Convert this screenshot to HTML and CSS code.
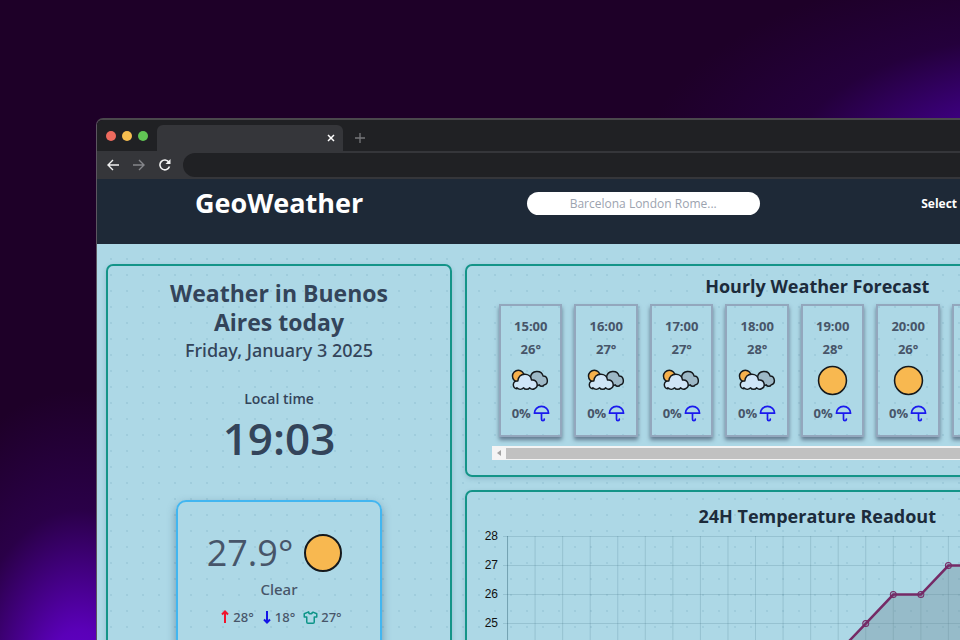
FILE: index.html
```html
<!DOCTYPE html>
<html lang="en">
<head>
<meta charset="utf-8">
<title>GeoWeather</title>
<link rel="stylesheet" href="styles.css">
</head>
<body>
<svg class="defs" width="0" height="0" aria-hidden="true">
  <symbol id="cloudy" viewBox="0 0 40 22">
    <g stroke="#14181c" stroke-width="1.5" stroke-linejoin="round">
      <path fill="#9db8c6" d="M20 8C21 1 31 0 33 7c5 0 6 8 1 9-1 2-4 2-5 0-2 1-9 1-9-8z"/>
      <circle cx="7.500" cy="7" r="6" fill="#f6b04c"/>
      <path fill="#cfe5f7" d="M6 20c-5 0-5-9 1-8 1-9 13-9 14-1 6-1 8 7 3 9-2 1-4 0-5-1-1 2-5 2-6 0-2 2-5 2-7 0z"/>
    </g>
  </symbol>
  <symbol id="sun" viewBox="0 0 40 40">
    <circle cx="20" cy="20" r="18" fill="#f8b850" stroke="#14181c" stroke-width="2"/>
  </symbol>
  <symbol id="umbrella" viewBox="0 0 24 24">
    <path fill="none" stroke="#1a1aee" stroke-width="2.400" stroke-linecap="round" stroke-linejoin="round" d="M2 11.500a10 9.500 0 0 1 20 0zM12 12v8a2 2 0 0 0 4 0"/>
  </symbol>
  <symbol id="arrow-up" viewBox="0 0 10 16">
    <path fill="none" stroke="#f0142d" stroke-width="2" d="M5 14V2M2 5.500 5 2.500l3 3"/>
  </symbol>
  <symbol id="arrow-down" viewBox="0 0 10 16">
    <path fill="none" stroke="#1414e6" stroke-width="2" d="M5 2v12M2 10.500l3 3 3-3"/>
  </symbol>
  <symbol id="shirt" viewBox="0 0 24 24">
    <path fill="none" stroke="#0d9488" stroke-width="2.400" stroke-linejoin="round" d="M15 3l7 3v5h-4v8a2 2 0 0 1-2 2H8a2 2 0 0 1-2-2v-8H2V6l7-3a3 3 0 0 0 6 0"/>
  </symbol>
</svg>

<div class="browser">
  <div class="tabs">
    <div class="lights"><i class="red"></i><i class="amber"></i><i class="green"></i></div>
    <div class="tab">
      <button aria-label="Close tab"><svg width="8" height="8" viewBox="0 0 8 8"><path d="M1 1l6 6M7 1L1 7" stroke="#fff" stroke-width="1.500"/></svg></button>
    </div>
    <button class="new-tab" aria-label="New tab"><svg width="10" height="10" viewBox="0 0 10 10"><path d="M5 0v10M0 5h10" stroke="#76777a" stroke-width="1.300"/></svg></button>
  </div>
  <div class="toolbar">
    <button aria-label="Back"><svg width="12" height="12" viewBox="0 0 12 12"><path d="M12 6H1.500M6 1 1 6l5 5" fill="none" stroke="#f1f1f1" stroke-width="1.400"/></svg></button>
    <button aria-label="Forward"><svg width="12" height="12" viewBox="0 0 12 12"><path d="M0 6h10.500M6 1l5 5-5 5" fill="none" stroke="#85868a" stroke-width="1.400"/></svg></button>
    <button aria-label="Reload"><svg width="12" height="12" viewBox="0 0 12 12"><path d="M10.500 7.500A4.900 4.900 0 1 1 9.800 3" fill="none" stroke="#f1f1f1" stroke-width="1.600"/><path d="M11.500 0v5h-5z" fill="#f1f1f1"/></svg></button>
    <input class="address" type="text" aria-label="Address">
  </div>

  <header class="site-header">
    <h1>GeoWeather</h1>
    <input class="search" type="text" placeholder="Barcelona London Rome..." aria-label="City">
    <span class="select-label">Select</span>
  </header>

  <main class="content">
    <section class="panel today">
      <h2>Weather in Buenos Aires today</h2>
      <p class="date">Friday, January 3 2025</p>
      <p class="local">Local time</p>
      <p class="clock">19:03</p>
      <div class="current">
        <div class="now"><span>27.9°</span><svg width="40" height="40"><use href="#sun"/></svg></div>
        <p class="condition">Clear</p>
        <div class="range">
          <span><svg width="10" height="16"><use href="#arrow-up"/></svg>28°</span>
          <span><svg width="10" height="16"><use href="#arrow-down"/></svg>18°</span>
          <span><svg width="15" height="15"><use href="#shirt"/></svg>27°</span>
        </div>
      </div>
    </section>

    <div class="column">
      <section class="panel hourly">
        <h2>Hourly Weather Forecast</h2>
        <ul class="hours" id="hours"></ul>
        <div class="scrollbar">
          <button aria-label="Scroll left"><svg width="4" height="6" viewBox="0 0 4 6"><path d="M4 0v6L0 3z" fill="#a3a3a3"/></svg></button>
          <div class="thumb"></div>
        </div>
      </section>
      <section class="panel readout">
        <h2>24H Temperature Readout</h2>
        <svg class="chart" id="chart" viewBox="0 0 700 320" role="img" aria-label="Temperature over 24 hours"></svg>
      </section>
    </div>
  </main>
</div>
<script src="app.js"></script>
</body>
</html>
```
FILE: styles.css
```css
* { box-sizing: border-box; }

html, body { height: 100%; }

body {
  margin: 0;
  overflow: hidden;
  font-family: "Segoe UI", "Open Sans", sans-serif;
  color: #33445a;
  background:
    radial-gradient(ellipse 420px 210px at 1060px 170px, #5a00c4 0, rgba(72, 0, 160, 0.7) 35%, rgba(50, 0, 105, 0.3) 65%, rgba(40, 0, 80, 0) 100%),
    radial-gradient(ellipse 190px 300px at 80px 690px, #6400d2 0, #5a00b8 20%, rgba(60, 0, 120, 0.4) 60%, rgba(60, 0, 120, 0) 100%),
    #1e0028;
}

h1, h2, p, ul { margin: 0; padding: 0; }
button { padding: 0; border: 0; background: none; display: grid; place-items: center; }
svg { display: block; }
.defs { position: absolute; }

.browser {
  width: 114vw;
  margin: 118px 0 0 10vw;
  border: 1px solid #5c5560;
  border-top: 2px solid #4a484c;
  border-radius: 7px 7px 0 0;
  overflow: hidden;
}

.tabs {
  display: flex;
  align-items: center;
  height: 31px;
  padding-left: 9px;
  background: #202124;
}
.lights { display: flex; gap: 6px; width: 51px; }
.lights i { width: 10px; height: 10px; border-radius: 50%; }
.red { background: #ed6a5e; }
.amber { background: #f6be4f; }
.green { background: #61c554; }
.tab {
  display: flex;
  align-items: center;
  justify-content: flex-end;
  align-self: flex-end;
  width: 186px;
  height: 26px;
  padding-right: 8px;
  border-radius: 6px 6px 0 0;
  background: #35363a;
}
.new-tab { margin-left: 12px; padding-top: 4px; }

.toolbar {
  display: flex;
  align-items: center;
  gap: 14px;
  height: 28px;
  padding-left: 10px;
  background: #35363a;
}
.address {
  flex: 1;
  height: 24px;
  margin-left: -2px;
  border: 0;
  border-radius: 12px;
  background: #202124;
}

.site-header {
  display: grid;
  grid-template-columns: repeat(3, 1fr);
  justify-items: center;
  align-items: center;
  height: 65px;
  padding-bottom: 16px;
  background: #1e2937;
  color: #fff;
}
.site-header h1 { font-size: 27px; line-height: 32px; padding-bottom: 2px; }
.search {
  width: 64%;
  height: 23px;
  border: 0;
  border-radius: 12px;
  background: #fff;
  font-family: inherit;
  font-size: 12px;
  text-align: center;
}
.search::placeholder { color: #9ca3af; }
.select-label {
  justify-self: start;
  padding-left: 96px;
  font-size: 12px;
  font-weight: 700;
}

.content {
  display: flex;
  gap: 13px;
  padding: 20px 20px 20px 9px;
  background: radial-gradient(circle at 8px 8px, rgba(60, 120, 150, 0.12) 1px, transparent 1px) 6px 7px / 16px 16px, #add8e6;
}
.panel {
  border: 2px solid #149488;
  border-radius: 7px;
  text-align: center;
  box-shadow: 0 2px 5px rgba(40, 80, 110, 0.2);
}
.column { flex: 1; min-width: 0; display: flex; flex-direction: column; gap: 13px; }
.column h2 { color: #1c2b3b; font-size: 18px; line-height: 24px; }

.today { flex: 0 0 346px; padding: 13px 48px; }
.today h2 { font-size: 23px; line-height: 29px; }
.date { font: 500 18px/26px "Segoe UI", "Noto Sans", sans-serif; }
.local { margin-top: 27px; font-size: 14px; line-height: 18px; font-weight: 600; }
.clock { font-size: 44px; line-height: 60px; font-weight: 600; }

.current {
  width: 206px;
  min-height: 230px;
  margin: 32px auto 0;
  padding: 27px 0;
  border: 2px solid #42b6f0;
  border-radius: 10px;
  box-shadow: 0 4px 8px rgba(50, 80, 110, 0.5);
  color: #475569;
}
.now { display: flex; align-items: center; justify-content: center; gap: 10px; padding-right: 8px; }
.now span { font-size: 36px; line-height: 48px; }
.condition { font: 500 15px/24px "Segoe UI", "Noto Sans", sans-serif; }
.range { display: flex; justify-content: center; gap: 8px; margin-top: 6px; padding-left: 4px; font: 500 13px/20px "Segoe UI", "Noto Sans", sans-serif; }
.range span { display: flex; align-items: center; gap: 3px; }

.hourly { height: 213px; padding: 8px 0 0 25px; }
.hourly h2 { padding-right: 25px; }
.hours {
  display: flex;
  gap: 12px;
  padding: 6px 7px 9px;
  overflow: hidden;
  list-style: none;
  color: #475569;
  font-size: 13px;
  font-weight: 700;
}
.hours li {
  flex: 0 0 9.6%;
  display: flex;
  flex-direction: column;
  align-items: center;
  height: 133px;
  padding-top: 9px;
  border: 2px solid #93a7bd;
  box-shadow: 0 3px 4px rgba(60, 75, 100, 0.65);
  line-height: 23px;
}
.hours .sky { display: grid; place-items: center; height: 38px; }
.rain { display: flex; align-items: center; gap: 2px; margin-top: 3px; }
.scrollbar { display: flex; align-items: center; height: 14px; background: #f4f4f4; }
.scrollbar button { width: 14px; height: 14px; }
.thumb { flex: 1; height: 11px; background: #c1c1c1; }

.readout { padding-top: 12px; }
.chart { width: 100%; }
.chart text { fill: #111; font: 12px "Liberation Sans", Arial, sans-serif; text-anchor: end; }
.grid { stroke: rgba(30, 80, 100, 0.16); }
.axis { stroke: rgba(30, 80, 100, 0.4); }
.area { fill: rgba(110, 135, 145, 0.35); }
.line { fill: none; stroke: #752a66; stroke-width: 2.5; }
.point { fill: rgba(117, 42, 102, 0.25); stroke: #752a66; }
```
FILE: app.js
```js
const hours = [
  ["15:00", 26, "cloudy"], ["16:00", 27, "cloudy"], ["17:00", 27, "cloudy"],
  ["18:00", 28, "cloudy"], ["19:00", 28, "sun"], ["20:00", 26, "sun"],
  ["21:00", 25, "sun"], ["22:00", 24, "sun"], ["23:00", 23, "sun"]
];
document.getElementById("hours").innerHTML = hours.map(([time, temp, sky]) => `
  <li><span>${time}</span><span>${temp}°</span>
  <span class="sky"><svg width="${sky === "sun" ? 31 : 39}" height="${sky === "sun" ? 31 : 22}"><use href="#${sky}"/></svg></span>
  <span class="rain">0%<svg width="17" height="17"><use href="#umbrella"/></svg></span></li>`).join("");

const temps = [22, 21, 21, 20, 20, 19, 19, 18, 18, 19, 21, 23, 24, 25, 26, 26, 27, 27, 28, 28, 26, 25, 24, 23];
const x = i => 40.5 + i * 27.54;
const y = t => 8.5 + (28 - t) * 29;
let out = "";
for (let t = 28; t >= 18; t--) {
  out += `<path class="grid" d="M36 ${y(t)}H${x(23)}"/><text x="31" y="${y(t) + 3}">${t}</text>`;
}
temps.forEach((t, i) => {
  out += `<path class="${i ? "grid" : "axis"}" d="M${x(i)} 8V310"/>`;
});
const points = temps.map((t, i) => `${x(i)},${y(t)}`).join(" ");
out += `<polygon class="area" points="${x(0)},310 ${points} ${x(23)},310"/><polyline class="line" points="${points}"/>`;
temps.forEach((t, i) => { out += `<circle class="point" cx="${x(i)}" cy="${y(t)}" r="3"/>`; });
document.getElementById("chart").innerHTML = out;
```
